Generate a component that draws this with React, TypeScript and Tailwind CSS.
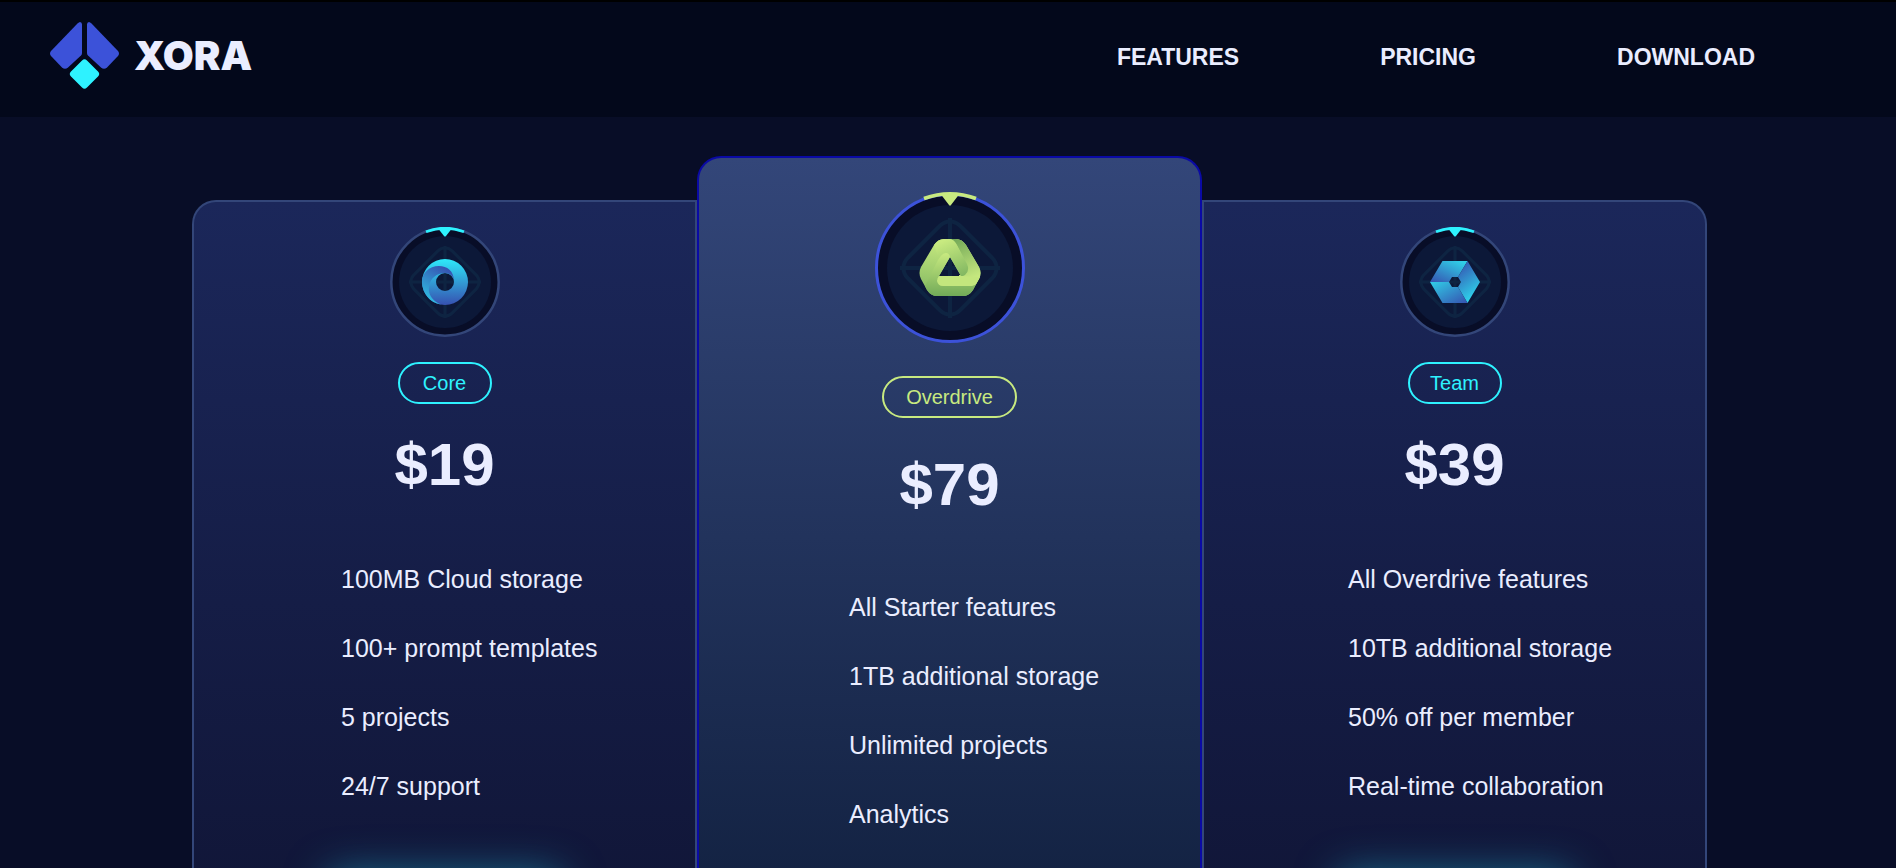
import React from "react";

type Plan = {
  id: "core" | "overdrive" | "team";
  title: string;
  price: number;
  features: string[];
};

const plans: Plan[] = [
  {
    id: "core",
    title: "Core",
    price: 19,
    features: ["100MB Cloud storage", "100+ prompt templates", "5 projects", "24/7 support"],
  },
  {
    id: "overdrive",
    title: "Overdrive",
    price: 79,
    features: ["All Starter features", "1TB additional storage", "Unlimited projects", "Analytics"],
  },
  {
    id: "team",
    title: "Team",
    price: 39,
    features: [
      "All Overdrive features",
      "10TB additional storage",
      "50% off per member",
      "Real-time collaboration",
    ],
  },
];

const links = ["Features", "Pricing", "Download"];

function LogoMark() {
  return (
    <svg viewBox="0 0 70 68" className="h-[68px] w-[70px]" aria-hidden="true">
      <path
        d="M32 2.5 V31 Q32 32.5 31 33.5 L18 45.5 Q15 48 12 45.5 L1 34 Q-1 31.500 1 29 L27.500 1.500 Q29 0 30 0 Q32 0 32 2.500Z"
        fill="#3C52D9"
      />
      <path
        d="M37 2.500 V31 Q37 32.500 38 33.500 L51 45.500 Q54 48 57 45.500 L68 34 Q70 31.500 68 29 L41.500 1.500 Q40 0 39 0 Q37 0 37 2.500Z"
        fill="#3C52D9"
      />
      <rect x="23.200" y="40.700" width="22.600" height="22.600" rx="3.500" transform="rotate(45 34.500 52)" fill="#2EF2FF" />
    </svg>
  );
}

function CoreMark() {
  return (
    <g>
      <defs>
        <linearGradient id="core-a" x1="0" y1="0" x2="0" y2="1">
          <stop offset="0" stopColor="#2EE9FA" />
          <stop offset="1" stopColor="#3650B0" />
        </linearGradient>
        <linearGradient id="core-b" x1="0.7" y1="0" x2="0.2" y2="1">
          <stop offset="0" stopColor="#3650B0" />
          <stop offset="1" stopColor="#2FC6E6" />
        </linearGradient>
      </defs>
      <path
        fillRule="evenodd"
        d="M55 32a23 23 0 1 1 0 46a23 23 0 0 1 0-46ZM55 46a9 9 0 1 0 0 18a9 9 0 0 0 0-18Z"
        fill="url(#core-a)"
      />
      <path
        d="M64 54 C64 44 57 39 49 39 C39 39 32 46 32 55 C32 66 40 76 51 77.600 C42 74 38 67 39 60 C40 51 47 46 55 46 C60 46 64 50 64 54Z"
        fill="url(#core-b)"
      />
    </g>
  );
}

function TeamMark() {
  return (
    <g>
      <defs>
        <linearGradient id="team-a" x1="0" y1="1" x2="0.8" y2="0">
          <stop offset="0" stopColor="#3552B0" />
          <stop offset="1" stopColor="#30CFE8" />
        </linearGradient>
        <linearGradient id="team-b" x1="0.2" y1="0" x2="0.6" y2="1">
          <stop offset="0" stopColor="#3552B0" />
          <stop offset="1" stopColor="#2EDDF0" />
        </linearGradient>
        <linearGradient id="team-c" x1="0" y1="0" x2="1" y2="1">
          <stop offset="0" stopColor="#30CFE8" />
          <stop offset="1" stopColor="#3552B0" />
        </linearGradient>
      </defs>
      <path d="M30 55 L42.500 34 H67.500 L58 50 H52 L49 55Z" fill="url(#team-a)" />
      <path d="M67.500 34 L80 55 L67.500 76 L58 60 L61 55 L58 50Z" fill="url(#team-b)" />
      <path d="M67.500 76 H42.500 L30 55 H49 L52 60 H58Z" fill="url(#team-c)" />
    </g>
  );
}

function OverdriveMark() {
  return (
    <g transform="translate(0 2)">
      <defs>
        <linearGradient id="over-a" x1="0.4" y1="0" x2="0.3" y2="1">
          <stop offset="0" stopColor="#C8EA80" />
          <stop offset="1" stopColor="#83B862" />
        </linearGradient>
        <linearGradient id="over-b" x1="0" y1="0" x2="0.3" y2="1">
          <stop offset="0" stopColor="#6FA556" />
          <stop offset="1" stopColor="#C8EA80" />
        </linearGradient>
        <linearGradient id="over-c" x1="0" y1="0" x2="0" y2="1">
          <stop offset="0" stopColor="#C8EA80" />
          <stop offset="1" stopColor="#72AA58" />
        </linearGradient>
        <linearGradient id="over-d" x1="0.4" y1="0" x2="0.8" y2="1">
          <stop offset="0" stopColor="#C8EA80" />
          <stop offset="1" stopColor="#83B862" />
        </linearGradient>
      </defs>
      <path
        fillRule="evenodd"
        d="M69 46 H81 Q87 46 91 52 L104 74 Q107 80 104 86 L98 97 Q94 103 88 103 H62 Q56 103 52 97 L46 86 Q43 80 46 74 L59 52 Q63 46 69 46Z M75 64 L64 83 H86Z"
        fill="url(#over-a)"
      />
      <path d="M74 46 H81 Q87 46 91 52 L104 74 Q107 80 104 86 L101 91 Q98 93 93 93 H84 V82 H88 Q95 78 92 72 L81 51 Q78 46 74 46Z" fill="url(#over-b)" />
      <path d="M69 46 H74 Q79 46 82 52 L92 71 Q95 78 90 82 Q88 83.500 86 83 L75 64 Q74 60 71 60 Q67 60 64 66 L59 52 Q63 46 69 46Z" fill="url(#over-d)" />
      <path d="M50 93 L63 67 Q67 60 71 60 Q74 60 75 64 L64 83 Q63 85 63 88 Q63 93 68 93 H94 Q99 93 101 91 L98 97 Q94 103 88 103 H62 Q56 103 52 97Z" fill="url(#over-c)" />
      <path d="M64 83 H88 Q96 84 105 84 L101 91 Q99 93 94 93 H68 Q63 93 62 88 Q62 85 64 83Z" fill="#C3E67D" />
    </g>
  );
}

function PlanBadge({ id }: { id: Plan["id"] }) {
  if (id === "overdrive") {
    return (
      <svg viewBox="0 0 150 152" className="h-[152px] w-[150px]" aria-hidden="true">
        <circle cx="75" cy="77" r="73.500" fill="#080D27" stroke="#3C52D9" strokeWidth="3" />
        <circle cx="75" cy="77" r="63" fill="#0C1838" />
        <g fill="none" stroke="#0E2442" strokeWidth="4">
          <rect x="38" y="40" width="74" height="74" rx="14" transform="rotate(45 75 77)" />
          <path d="M75 27V127M25 77H125" />
        </g>
        <OverdriveMark />
        <path d="M49 7.500 A74.500 74.500 0 0 1 101 7.500" fill="none" stroke="#C8EA80" strokeWidth="3.500" />
        <path d="M66 3.500 H84 L76 14 Q75 15.500 74 14Z" fill="#C8EA80" />
      </svg>
    );
  }
  return (
    <svg viewBox="0 0 110 111" className="h-[111px] w-[110px]" aria-hidden="true">
      <circle cx="55" cy="55" r="53.700" fill="#080D27" stroke="#334679" strokeWidth="2.500" />
      <circle cx="55" cy="55" r="46" fill="#0C1838" />
      <g fill="none" stroke="#0E2442" strokeWidth="3">
        <rect x="28" y="28" width="54" height="54" rx="10" transform="rotate(45 55 55)" />
        <path d="M55 19V91M19 55H91" />
      </g>
      {id === "core" ? <CoreMark /> : <TeamMark />}
      <path d="M36 4.800 A53.700 53.700 0 0 1 74 4.800" fill="none" stroke="#2EF2FF" strokeWidth="2.800" />
      <path d="M48.500 2 H61.500 L56 9 Q55 10 54 9Z" fill="#2EF2FF" />
    </svg>
  );
}

function PlanCard({ plan }: { plan: Plan }) {
  const main = plan.id === "overdrive";
  const shape = main
    ? "mt-[39px] rounded-t-3xl border-[#0a0aa5] bg-linear-to-b from-[#334679] to-[#11203f] pt-[33px]"
    : plan.id === "core"
      ? "mt-[83px] rounded-tl-3xl border-[#334679] bg-linear-to-b from-[#1b275a] to-[#101536] pt-[25px]"
      : "mt-[83px] rounded-tr-3xl border-[#334679] bg-linear-to-b from-[#1b275a] to-[#101536] pt-[25px]";
  const inset = main ? "pl-[150px]" : plan.id === "core" ? "pl-[147px]" : "pl-[144px]";

  return (
    <article className={`flex flex-1 flex-col items-center border-2 border-b-0 ${shape}`}>
      <PlanBadge id={plan.id} />
      <h2
        className={`flex h-[42px] min-w-[94px] items-center justify-center rounded-full border-2 text-xl ${
          main ? "mt-[33px] border-[#C8EA80] px-[22px] text-[#C8EA80]" : "mt-6 border-[#2EF2FF] px-5 text-[#2EF2FF]"
        }`}
      >
        {plan.title}
      </h2>
      <p className={`text-[60px] leading-[60px] font-bold ${main ? "mt-[37px]" : "mt-[31px]"}`}>${plan.price}</p>
      <ul className={`w-full text-[25px] leading-[29px] ${inset} ${main ? "mt-[78px]" : "mt-[70px]"}`}>
        {plan.features.map((feature) => (
          <li key={feature} className="mb-10">
            {feature}
          </li>
        ))}
      </ul>
      {!main && (
        <div className="mt-8 h-16 w-[236px] rounded-2xl bg-[#16496a] shadow-[0_0_40px_#1b6f8f]" aria-hidden="true" />
      )}
    </article>
  );
}

export default function App() {
  return (
    <div className="flex h-screen flex-col overflow-hidden bg-[#080D27] font-['Liberation_Sans',Arial,sans-serif] text-[#EAEDFF]">
      <header className="flex h-[117px] shrink-0 items-center justify-between border-t-2 border-black bg-[#03081b] pr-[141px] pb-1 pl-[50px]">
        <a href="#home" className="flex items-center gap-[14px] pb-1">
          <LogoMark />
          <span className="font-[Inter,sans-serif] text-[40px] leading-none font-black">XORA</span>
        </a>
        <nav className="flex gap-[141px] text-[23px] font-bold uppercase">
          {links.map((link) => (
            <a key={link} href={`#${link.toLowerCase()}`}>
              {link}
            </a>
          ))}
        </nav>
      </header>
      <main className="flex flex-1 shrink-0 pr-[189px] pl-48">
        {plans.map((plan) => (
          <PlanCard key={plan.id} plan={plan} />
        ))}
      </main>
    </div>
  );
}
